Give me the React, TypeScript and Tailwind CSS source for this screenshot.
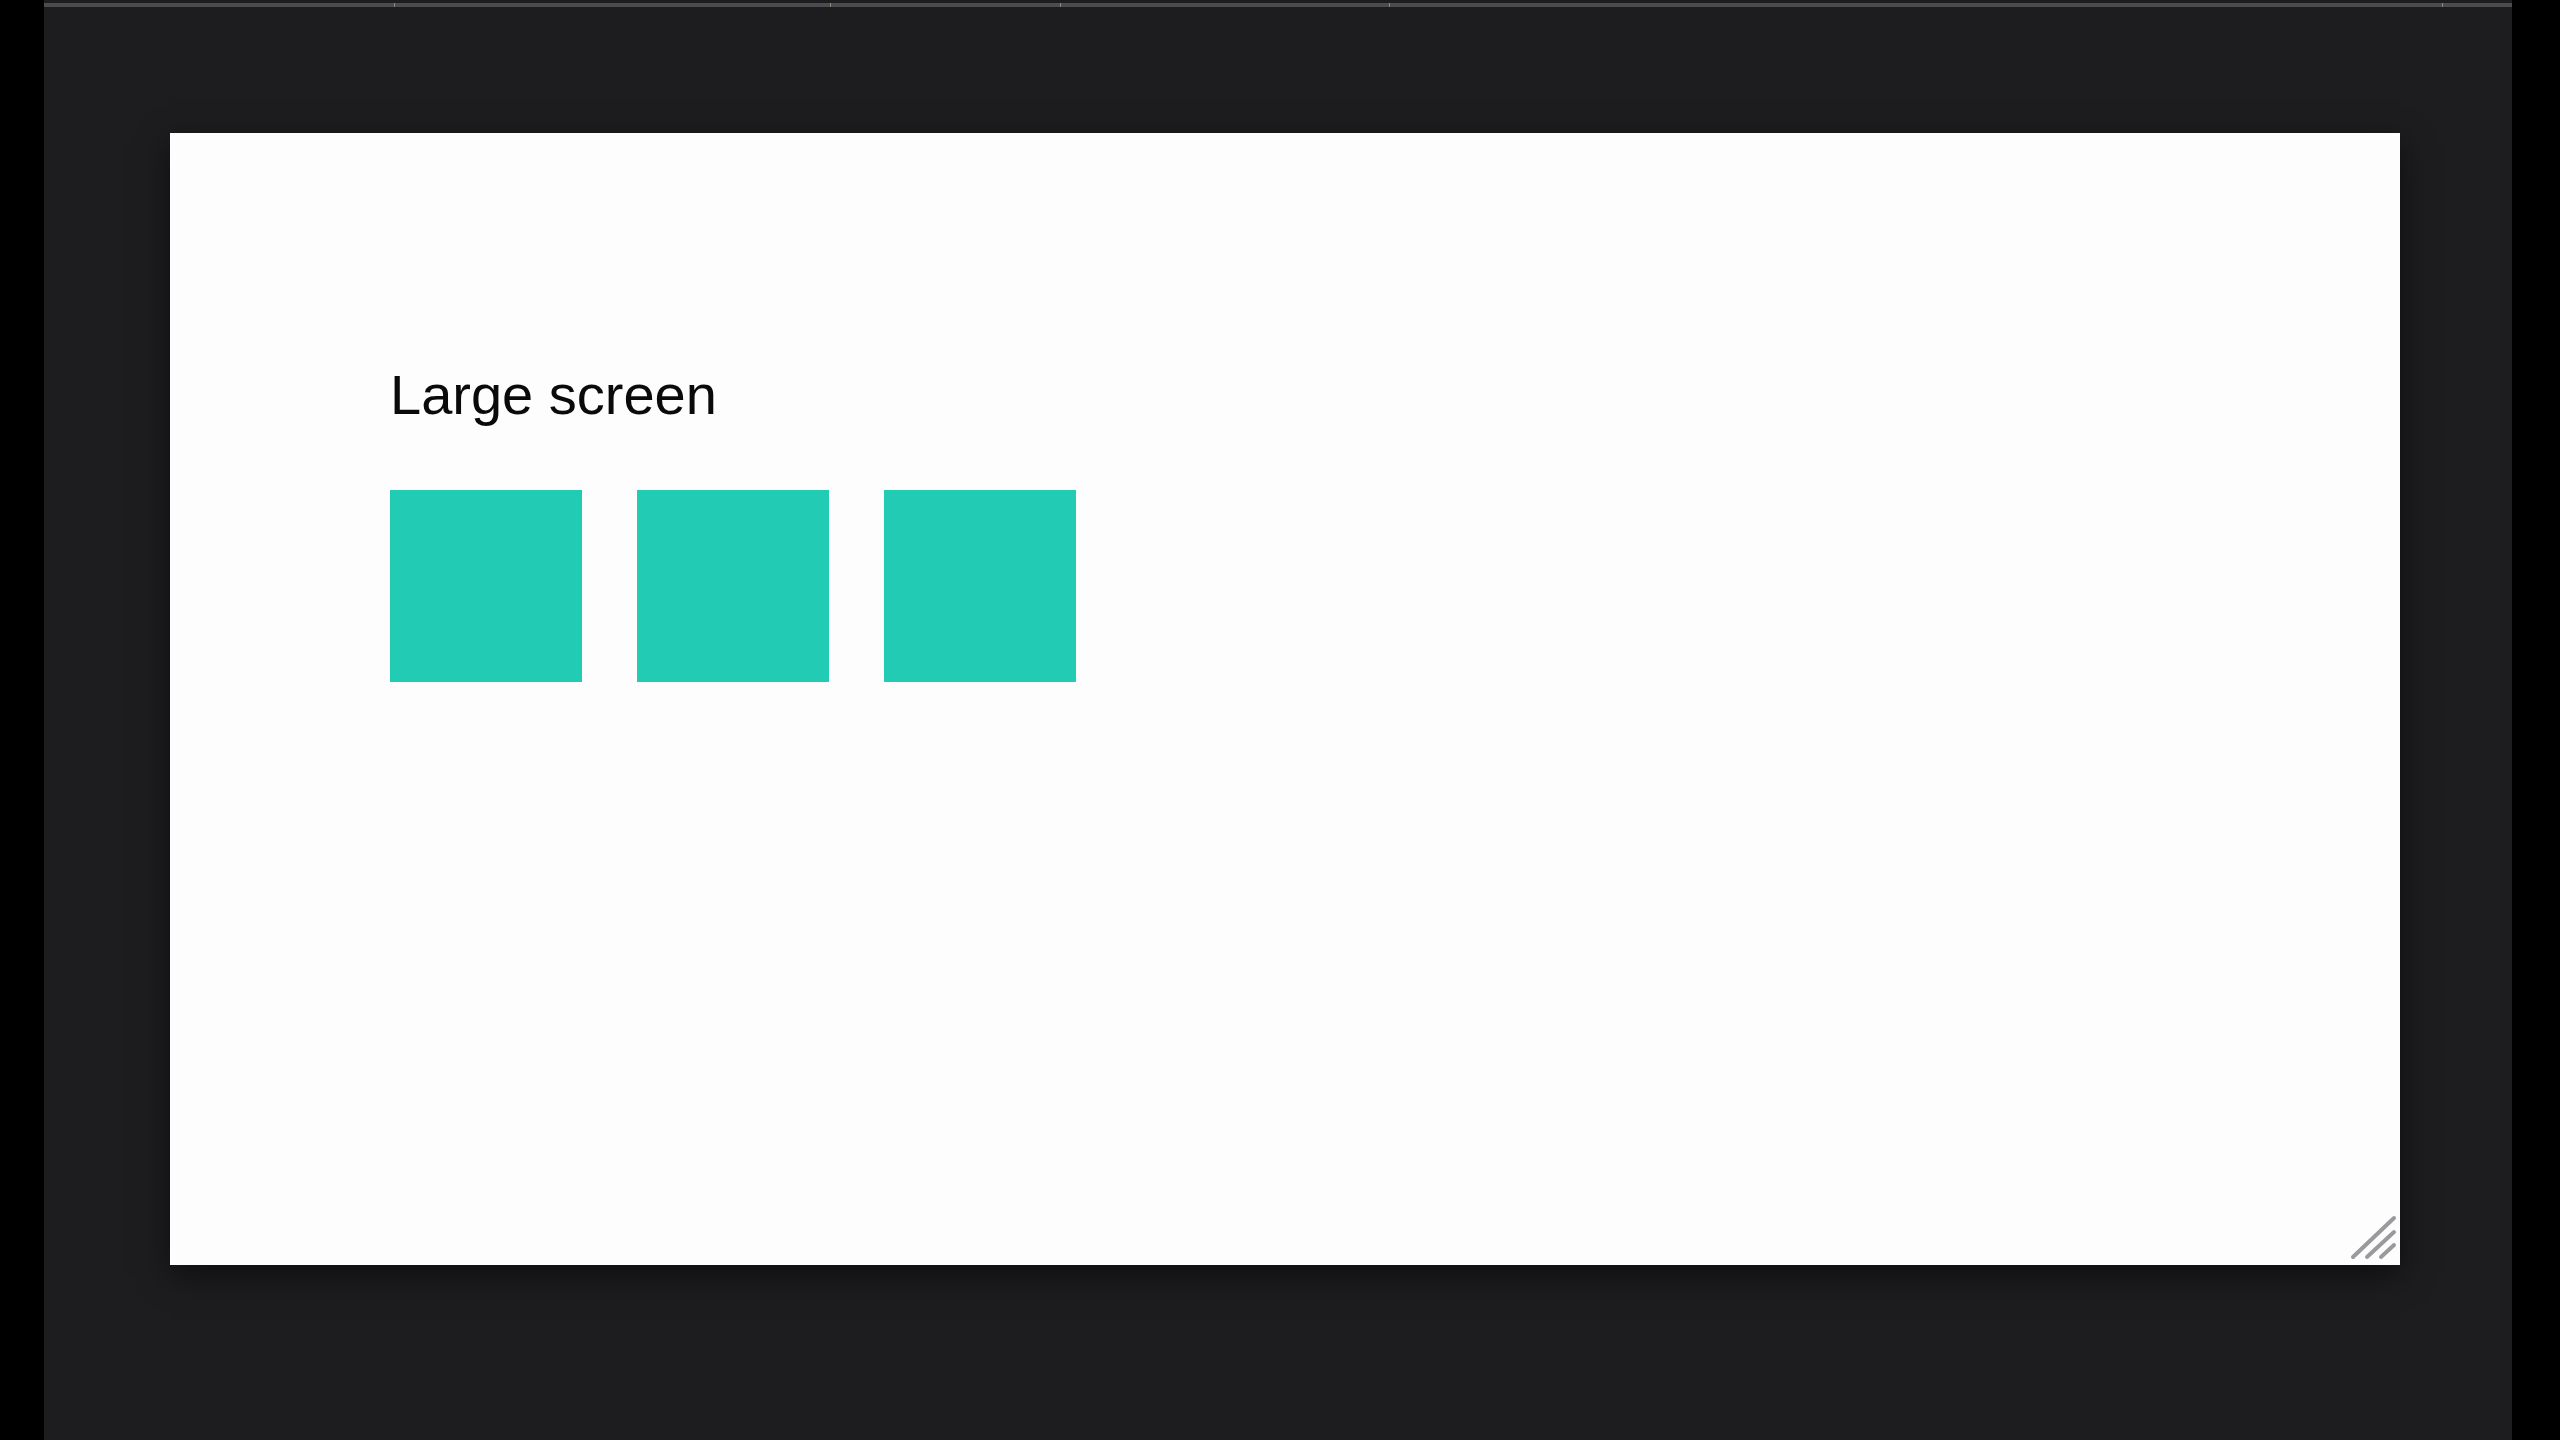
import React from 'react';

const Grip: React.FC = () => (
  <svg className="absolute right-[3px] bottom-[4px]" width="48" height="46" viewBox="0 0 48 46">
    <g stroke="#9a9a9e" strokeWidth="4" strokeLinecap="round">
      <line x1="4" y1="42" x2="45" y2="3" />
      <line x1="18" y1="42" x2="45" y2="17" />
      <line x1="32" y1="42" x2="45" y2="30" />
    </g>
  </svg>
);

const App: React.FC = () => {
  const boxes = [1, 2, 3];
  // tick offsets on the thin top strip
  const segments = [351, 436, 230, 329, 1053];

  return (
    <div className="h-screen w-full flex bg-black overflow-hidden">
      <div className="w-[44px] shrink-0 bg-black" />
      <div className="flex-1 flex flex-col bg-[#1d1d20]">
        <div className="mt-[3px] h-[4px] flex bg-[#4b4b50]">
          {segments.map((w, i) => (
            <div key={i} className="h-full border-r border-[#8a8a70]" style={{ width: w }} />
          ))}
        </div>
        <div className="relative ml-[126px] mt-[126px] w-[2230px] h-[1132px] bg-[#fdfdfd] shadow-[0_10px_30px_rgba(0,0,0,0.55)]">
          <div className="pl-[220px] pt-[234px]">
            <h1 className="text-[56px] leading-none font-normal text-[#0a0a0a] font-['Liberation_Sans',Arial,sans-serif]">
              Large screen
            </h1>
            <div className="mt-[67px] flex gap-[55px]">
              {boxes.map(b => (
                <div key={b} className="w-[192px] h-[192px] bg-[#22ccb4]" />
              ))}
            </div>
          </div>
          <Grip />
        </div>
      </div>
      <div className="w-[48px] shrink-0 bg-black" />
    </div>
  );
};

export default App;
